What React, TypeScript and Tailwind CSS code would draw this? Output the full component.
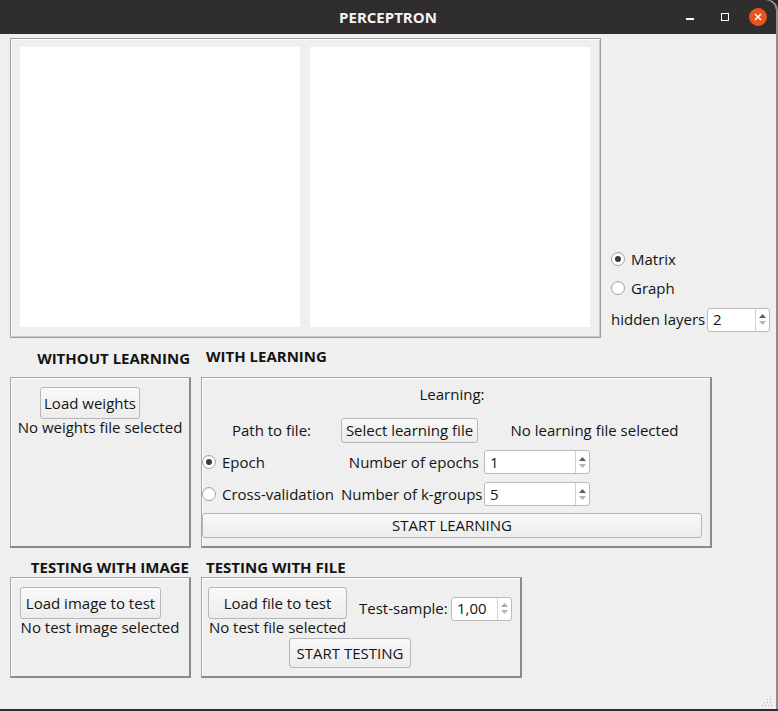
import React from 'react'

function Radio({ checked, label }: { checked?: boolean; label: string }) {
    return (
        <div className="flex items-center">
            <span className="w-[14px] h-[14px] rounded-full border border-[#a3a3a3] bg-white flex items-center justify-center shadow-[inset_0_1px_1px_rgba(0,0,0,0.08)]">
                {checked && <span className="w-[6px] h-[6px] rounded-full bg-[#3a3a3a]" />}
            </span>
            <span className="ml-[6px]">{label}</span>
        </div>
    )
}

function SpinBox({ value, className, upOn = true }: { value: string; className: string; upOn?: boolean }) {
    return (
        <div className={"flex h-[24px] bg-white border border-[#b9b9b9] rounded-[3px] " + className}>
            <div className="flex-1 flex items-center pl-[5px]">{value}</div>
            <div className="w-[14px] border-l border-[#d2d2d2] flex flex-col items-center justify-center gap-[3px]">
                <svg width="7" height="4" viewBox="0 0 7 4"><path d="M0 4 L3.5 0 L7 4 Z" fill={upOn ? '#5c5c5c' : '#a8a8a8'} /></svg>
                <svg width="7" height="4" viewBox="0 0 7 4"><path d="M0 0 L3.5 4 L7 0 Z" fill="#b4b4b4" /></svg>
            </div>
        </div>
    )
}

function Btn({ children, className }: { children: React.ReactNode; className: string }) {
    return (
        <button className={"flex items-center justify-center border border-[#b7b7b7] rounded-[3px] bg-gradient-to-b from-[#f9f9f9] to-[#ececec] whitespace-nowrap " + className}>
            {children}
        </button>
    )
}

const box = "border border-[#a7a7a7] border-r-2 border-b-2 border-r-[#8b8b8b] border-b-[#8b8b8b] shadow-[inset_1px_1px_0_#ffffff]"

export default function App() {
    return (
        <div className="w-[778px] h-[711px] bg-[#2a2a2a] overflow-hidden font-['Open_Sans',sans-serif] text-[15px] text-[#141414]">
            <div className="h-[709px] bg-[#efefef] rounded-tr-[10px] border-r-2 border-[#8d8d8d] flex flex-col">
                <div className="h-[34px] bg-[#302d2e] rounded-tr-[10px] grid grid-cols-[1fr_auto_1fr] items-center">
                    <div />
                    <div className="text-[#f4f4f4] font-bold text-[15px]">PERCEPTRON</div>
                    <div className="flex justify-end items-center pr-[9px]">
                        <span className="w-[8px] h-[2px] bg-white mt-[4px]" />
                        <span className="ml-[27px] w-[8px] h-[8px] border-[1.5px] border-white" />
                        <span className="ml-[20px] w-[18px] h-[18px] rounded-full bg-[#e95420] flex items-center justify-center">
                            <svg width="8" height="8" viewBox="0 0 8 8"><path d="M1 1 L7 7 M7 1 L1 7" stroke="#fff" strokeWidth="1.5" /></svg>
                        </span>
                    </div>
                </div>

                <div className="pl-[10px] flex flex-col">
                    <div className="flex mt-[4px]">
                        <div className="w-[591px] h-[300px] border border-[#9e9e9e] shadow-[inset_1px_1px_0_#ffffff,inset_-1px_-1px_0_#c8c8c8] pl-[9px] pt-[8px] flex gap-[10px]">
                            <div className="w-[280px] h-[280px] bg-white" />
                            <div className="w-[280px] h-[280px] bg-white" />
                        </div>
                        <div className="flex-1 flex flex-col justify-end pl-[10px] pr-[6px] pb-[7px]">
                            <div className="h-[22px] flex items-center"><Radio checked label="Matrix" /></div>
                            <div className="h-[22px] flex items-center mt-[7px]"><Radio label="Graph" /></div>
                            <div className="h-[23px] flex items-center justify-between mt-[9px]">
                                <span>hidden layers</span>
                                <SpinBox value="2" className="w-[63px]" />
                            </div>
                        </div>
                    </div>

                    <div className="h-[39px] flex items-center font-bold">
                        <div className="w-[181px] text-right pr-[1px] pt-[2px] whitespace-nowrap">WITHOUT LEARNING</div>
                        <div className="ml-[15px] pb-[2px]">WITH LEARNING</div>
                    </div>

                    <div className="flex gap-[10px] h-[171px]">
                        <div className={"w-[181px] pt-[9px] flex flex-col " + box}>
                            <Btn className="ml-[29px] w-[100px] h-[32px]">Load weights</Btn>
                            <div className="text-center leading-[17px] whitespace-nowrap">No weights file selected</div>
                        </div>
                        <div className={"w-[511px] flex flex-col " + box}>
                            <div className="pt-[6px] h-[26px] leading-[20px] text-center pr-[8px]">Learning:</div>
                            <div className="grid grid-cols-[139px_138px_1fr] mt-[14px] h-[25px] items-center">
                                <div className="text-center">Path to file:</div>
                                <Btn className="w-[137px] h-[25px]">Select learning file</Btn>
                                <div className="text-center whitespace-nowrap">No learning file selected</div>
                            </div>
                            <div className="grid grid-cols-[139px_138px_1fr] mt-[7px] h-[23px] items-center">
                                <Radio checked label="Epoch" />
                                <div className="text-right whitespace-nowrap">Number of epochs</div>
                                <SpinBox value="1" className="ml-[5px] w-[106px]" />
                            </div>
                            <div className="grid grid-cols-[139px_138px_1fr] mt-[9px] h-[23px] items-center">
                                <div className="whitespace-nowrap"><Radio label="Cross-validation" /></div>
                                <div className="text-right whitespace-nowrap">Number of k-groups</div>
                                <SpinBox value="5" className="ml-[5px] w-[106px]" />
                            </div>
                            <Btn className="mt-[8px] w-[500px] h-[25px]">START LEARNING</Btn>
                        </div>
                    </div>

                    <div className="h-[29px] flex items-end font-bold leading-[20px]">
                        <div className="w-[181px] text-right pr-[2px] whitespace-nowrap">TESTING WITH IMAGE</div>
                        <div className="ml-[15px]">TESTING WITH FILE</div>
                    </div>

                    <div className="flex gap-[10px] h-[101px]">
                        <div className={"w-[181px] pt-[9px] flex flex-col " + box}>
                            <Btn className="ml-[9px] w-[141px] h-[32px]">Load image to test</Btn>
                            <div className="text-center leading-[17px] whitespace-nowrap">No test image selected</div>
                        </div>
                        <div className={"w-[321px] pt-[9px] pl-[6px] flex flex-col " + box}>
                            <div className="flex items-start">
                                <div className="w-[139px] flex flex-col items-center">
                                    <Btn className="w-[139px] h-[32px]">Load file to test</Btn>
                                    <div className="leading-[17px] whitespace-nowrap">No test file selected</div>
                                </div>
                                <div className="ml-[12px] mt-[10px] h-[23px] w-[153px] flex items-center justify-between">
                                    <span className="whitespace-nowrap">Test-sample:</span>
                                    <SpinBox value="1,00" upOn={false} className="w-[61px]" />
                                </div>
                            </div>
                            <Btn className="ml-[81px] mt-[2px] w-[122px] h-[30px]">START TESTING</Btn>
                        </div>
                    </div>
                </div>

                <div className="flex-1 flex justify-end items-end pr-[4px] pb-[3px]">
                    <svg width="10" height="10" viewBox="0 0 10 10" fill="#b5b5b5">
                        <rect x="8" y="0" width="1" height="1" />
                        <rect x="5" y="3" width="1" height="1" /><rect x="8" y="3" width="1" height="1" />
                        <rect x="2" y="6" width="1" height="1" /><rect x="5" y="6" width="1" height="1" /><rect x="8" y="6" width="1" height="1" />
                        <rect x="0" y="9" width="1" height="1" /><rect x="3" y="9" width="1" height="1" /><rect x="6" y="9" width="1" height="1" /><rect x="9" y="9" width="1" height="1" />
                    </svg>
                </div>
            </div>
        </div>
    )
}
